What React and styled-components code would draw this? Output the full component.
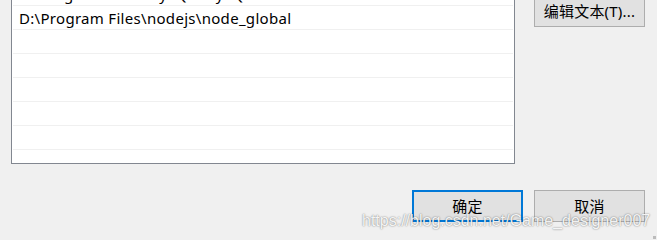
import React from "react";
import styled, { createGlobalStyle } from "styled-components";

const Global = createGlobalStyle`
  html, body { margin: 0; padding: 0; background: #f0f0f0; }
  body { font-family: "Noto Sans", "Noto Sans CJK SC", sans-serif; overflow: hidden; }
  * { box-sizing: border-box; }
`;

const Dialog = styled.div`
  position: relative;
  width: 657px;
  height: 240px;
  overflow: hidden;
  background: #f0f0f0;
  padding: 0 12px 0 11px;
`;

const TopSection = styled.div`
  display: flex;
  align-items: flex-start;
  gap: 19px;
  margin-top: -20px;
`;

const ListBox = styled.div`
  width: 504px;
  height: 184px;
  border: 1px solid #828790;
  background: #fff;
  padding: 1px;
  overflow: hidden;
`;

const Row = styled.div`
  height: 24px;
  border-bottom: 1px solid #f0f0f0;
  padding: 1px 0 0 6px;
  font-size: 15px;
  letter-spacing: 0.3px;
  line-height: 22px;
  color: #000;
  white-space: nowrap;
`;

const SideColumn = styled.div`
  display: flex;
  flex-direction: column;
  padding-top: 15px;
`;

const Button = styled.button`
  width: 111px;
  height: 32px;
  padding: 0;
  background: #e1e1e1;
  border: ${(p) => (p.$default ? "2px solid #0078d7" : "1px solid #adadad")};
  font-family: "Noto Sans", "Noto Sans CJK SC", sans-serif;
  font-size: 15px;
  letter-spacing: 0.2px;
  color: #000;
  display: flex;
  align-items: center;
  justify-content: center;
  line-height: 1;
`;

const BottomBar = styled.div`
  display: flex;
  justify-content: flex-end;
  gap: 11px;
  margin-top: 26px;
`;

const Watermark = styled.div`
  position: absolute;
  left: 362px;
  top: 212px;
  font-family: "Liberation Sans", Arial, sans-serif;
  font-size: 16px;
  line-height: 18px;
  color: rgba(255, 255, 255, 0.92);
  text-shadow: 0 0 2px rgba(0, 0, 0, 0.4), 0 0 1px rgba(0, 0, 0, 0.25);
  white-space: nowrap;
  pointer-events: none;
`;

const Grip = styled.div`
  position: absolute;
  left: 653px;
  top: 236px;
  width: 3px;
  height: 3px;
  background: #bcbcbc;
`;

const rows = [
  "C:\\Program Files\\MySQL\\MySQL Server 5.7\\bin",
  "D:\\Program Files\\nodejs\\node_global",
  "",
  "",
  "",
  "",
  "",
  "",
];

export default function App() {
  return (
    <>
      <Global />
      <Dialog>
        <TopSection>
          <ListBox>
            {rows.map((r, i) => (
              <Row key={i}>{r}</Row>
            ))}
          </ListBox>
          <SideColumn>
            <Button>编辑文本(T)...</Button>
          </SideColumn>
        </TopSection>
        <BottomBar>
          <Button $default>确定</Button>
          <Button>取消</Button>
        </BottomBar>
        <Watermark>https://blog.csdn.net/Game_designer007</Watermark>
        <Grip />
      </Dialog>
    </>
  );
}
